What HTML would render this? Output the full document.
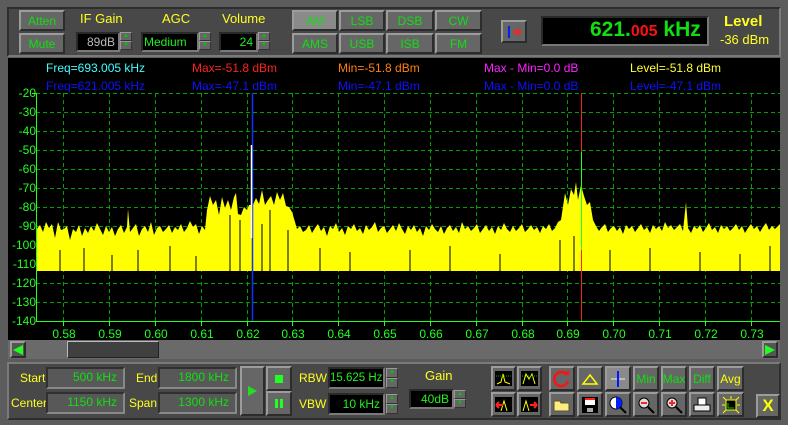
<!DOCTYPE html>
<html><head><meta charset="utf-8"><style>
*{margin:0;padding:0;box-sizing:border-box}
body{width:788px;height:425px;background:#5c5c5c;position:relative;overflow:hidden;font-family:"Liberation Sans",sans-serif;font-size:12px}
.a{position:absolute}
.panel{background:#484848;border-top:2px solid #2e2e2e;border-left:2px solid #2e2e2e;border-bottom:2px solid #7a7a7a;border-right:2px solid #7a7a7a}
.btn{position:absolute;background:#666;border-top:2px solid #9c9c9c;border-left:2px solid #9c9c9c;border-bottom:2px solid #2c2c2c;border-right:2px solid #2c2c2c;color:#10e010;text-align:center;font-size:12px;display:flex;align-items:center;justify-content:center}
.box{position:absolute;background:#000;border-top:2px solid #2a2a2a;border-left:2px solid #2a2a2a;border-bottom:2px solid #7a7a7a;border-right:2px solid #7a7a7a;color:#20f020;text-align:right;padding-right:3px;font-size:12px;line-height:16px;white-space:nowrap;overflow:hidden}
.fld{position:absolute;background:#585858;border-top:2px solid #303030;border-left:2px solid #303030;border-bottom:2px solid #888;border-right:2px solid #888;color:#10e010;text-align:right;padding-right:6px;line-height:17px;font-size:12px}
.spin{position:absolute;width:12px;background:#666}
.spin div{height:50%;border:1px solid #999;border-right-color:#333;border-bottom-color:#333;color:#0c0;font-size:6px;text-align:center;line-height:7px}
.y{color:#ffff20}
.lbl{position:absolute;font-size:12px;white-space:nowrap}
.yl{position:absolute;right:752px;color:#20ff20;font-size:12px;line-height:12px}
.xl{position:absolute;top:327px;color:#20ff20;font-size:12px;width:40px;text-align:center}
</style></head><body>
<div class="a panel" style="left:7px;top:7px;width:774px;height:50px"></div>
<div class="btn" style="left:19px;top:10px;width:46px;height:21px">Atten</div>
<div class="btn" style="left:19px;top:33px;width:46px;height:21px">Mute</div>
<div class="lbl y" style="left:80px;top:11px;font-size:13px">IF Gain</div>
<div class="lbl y" style="left:162px;top:11px;font-size:13px">AGC</div>
<div class="lbl y" style="left:222px;top:11px;font-size:13px">Volume</div>
<div class="box" style="left:76px;top:32px;width:44px;height:20px;color:#bbb">89dB</div>
<div class="spin" style="left:120px;top:32px;height:18px"><div>▲</div><div>▼</div></div>
<div class="box" style="left:141px;top:32px;width:58px;height:20px;text-align:left;padding-left:1px">Medium</div>
<div class="spin" style="left:199px;top:32px;height:18px"><div>▲</div><div>▼</div></div>
<div class="box" style="left:219px;top:32px;width:39px;height:20px">24</div>
<div class="spin" style="left:258px;top:32px;height:18px"><div>▲</div><div>▼</div></div>
<div class="btn" style="left:292px;top:10px;width:46px;height:21px;background:#8a8a8a">AM</div>
<div class="btn" style="left:339px;top:10px;width:46px;height:21px">LSB</div>
<div class="btn" style="left:386px;top:10px;width:48px;height:21px">DSB</div>
<div class="btn" style="left:435px;top:10px;width:47px;height:21px">CW</div>
<div class="btn" style="left:292px;top:33px;width:46px;height:21px">AMS</div>
<div class="btn" style="left:339px;top:33px;width:46px;height:21px">USB</div>
<div class="btn" style="left:386px;top:33px;width:48px;height:21px">ISB</div>
<div class="btn" style="left:435px;top:33px;width:47px;height:21px">FM</div>
<div class="btn" style="left:501px;top:20px;width:26px;height:23px"><svg width="18" height="14"><rect x="3" y="1" width="2" height="12" fill="#0020ff"/><path d="M7 7h8M12 4l3 3-3 3" stroke="#ff2020" stroke-width="2" fill="none"/></svg></div>
<div class="a" style="left:541px;top:16px;width:168px;height:30px;background:#000;border:2px solid #2a2a2a;border-bottom-color:#777;border-right-color:#777"></div>
<div class="lbl" style="left:590px;top:18px;font-size:21px;font-weight:bold;color:#10e010">621.<span style="color:#ff1010;font-size:16px">005</span> kHz</div>
<div class="lbl y" style="left:724px;top:13px;font-size:15px;font-weight:bold">Level</div>
<div class="lbl y" style="left:720px;top:32px;font-size:13px">-36 dBm</div>

<div class="a" style="left:8px;top:58px;width:772px;height:282px;background:#000"></div>
<div class="lbl" style="left:46px;top:61px;color:#40ffff">Freq=693.005 kHz</div>
<div class="lbl" style="left:192px;top:61px;color:#ff2020">Max=-51.8 dBm</div>
<div class="lbl" style="left:338px;top:61px;color:#ff8010">Min=-51.8 dBm</div>
<div class="lbl" style="left:484px;top:61px;color:#ff20ff">Max - Min=0.0 dB</div>
<div class="lbl" style="left:630px;top:61px;color:#ffff30">Level=-51.8 dBm</div>
<div class="lbl" style="left:46px;top:79px;color:#1010ff">Freq=621.005 kHz</div>
<div class="lbl" style="left:192px;top:79px;color:#1010ff">Max=-47.1 dBm</div>
<div class="lbl" style="left:338px;top:79px;color:#1010ff">Min=-47.1 dBm</div>
<div class="lbl" style="left:484px;top:79px;color:#1010ff">Max - Min=0.0 dB</div>
<div class="lbl" style="left:630px;top:79px;color:#1010ff">Level=-47.1 dBm</div>
<svg class="a" style="left:0;top:0" width="788" height="425">
<g stroke="#00a000" stroke-dasharray="4,3" stroke-width="1">
<path d="M36 93.5H780M36 112.5H780M36 131.5H780M36 150.5H780M36 169.5H780M36 188.5H780M36 207.5H780M36 226.5H780M36 245.5H780M36 264.5H780M36 283.5H780M36 302.5H780"/>
<path d="M63.5 93V321M109.5 93V321M155.5 93V321M201.5 93V321M247.5 93V321M292.5 93V321M338.5 93V321M384.5 93V321M430.5 93V321M476.5 93V321M522.5 93V321M567.5 93V321M613.5 93V321M659.5 93V321M705.5 93V321M751.5 93V321"/>
</g>
<polygon fill="#ffff00" points="36,271 36,230 40,225 43,232 46,222 49,228 52,224 55,238 58,222 61,230 64,229 67,226 70,240 73,229 76,232 79,225 82,236 85,228 88,233 91,226 94,231 97,223 100,229 103,235 106,226 109,232 112,227 115,236 118,229 121,225 124,233 127,227 128,209 130,232 133,228 136,224 139,236 142,229 145,226 148,232 151,222 154,235 157,228 160,226 163,232 166,229 169,225 172,233 175,227 178,230 181,224 184,232 187,228 190,221 193,227 196,224 199,234 202,226 205,230 207,210 210,196 213,205 216,200 219,215 222,197 225,208 228,200 231,210 234,197 236,193 238,214 241,215 244,207 247,210 249,205 253,205 256,198 259,204 262,190 265,205 268,200 271,196 274,205 277,192 280,200 283,193 286,206 289,207 292,212 295,222 297,229 300,226 303,232 306,230 309,225 312,233 315,228 318,224 321,231 324,227 327,236 330,226 333,229 336,223 339,232 342,228 345,235 348,226 351,229 354,224 357,231 360,228 363,234 366,225 369,230 372,227 375,222 378,232 381,228 384,226 387,233 390,229 393,225 396,231 399,223 402,229 405,234 408,226 411,230 414,225 417,232 420,228 423,236 426,226 429,230 432,224 435,229 438,232 441,226 444,234 447,228 450,225 453,231 456,227 459,233 462,222 465,229 468,226 471,231 474,228 477,224 480,233 483,229 486,225 489,231 492,227 495,234 498,226 501,230 504,223 507,229 510,232 513,226 516,231 519,228 522,224 525,232 528,229 531,225 534,230 537,227 540,233 543,226 546,229 549,224 552,231 555,228 558,222 561,220 565,193 568,205 571,189 574,195 576,182 578,200 581,185 584,196 587,205 590,202 593,220 596,226 599,231 602,227 605,224 608,232 611,228 614,226 617,231 620,227 623,234 626,225 629,229 632,226 635,232 638,228 641,224 644,230 647,227 650,233 653,225 656,229 659,226 662,231 665,222 668,228 671,225 674,230 677,227 680,224 683,231 686,202 688,228 691,233 694,226 697,229 700,225 703,232 706,228 709,223 712,230 715,227 718,233 721,225 724,229 727,226 730,231 733,228 736,224 739,230 742,226 745,233 748,228 751,224 754,229 757,226 760,232 763,227 766,223 769,230 772,226 775,229 780,224 780,271"/>
<g stroke="#000" stroke-width="1">
<path d="M60 250V271M84 248V271M112 255V271M138 250V271M170 246V271M196 256V271M230 215V271M240 220V271M262 224V271M270 210V271M288 230V271M320 248V271M350 252V271M410 250V271M450 246V271M500 254V271M560 240V271M574 236V271M610 250V271M650 248V271M700 252V271M740 254V271M770 246V271"/>
</g>
<path d="M252.5 93V321" stroke="#1030ff" stroke-width="1.5"/>
<path d="M251.5 145V238" stroke="#fff" stroke-width="1.5"/>
<path d="M581.5 93V321" stroke="#ff2020"/>
<path d="M581.5 152V250" stroke="#20ff20"/>
<path d="M36.5 93V321.5H780" stroke="#20ff20" fill="none"/>
<g stroke="#20ff20"><path d="M63.5 321V326M109.5 321V326M155.5 321V326M201.5 321V326M247.5 321V326M292.5 321V326M338.5 321V326M384.5 321V326M430.5 321V326M476.5 321V326M522.5 321V326M567.5 321V326M613.5 321V326M659.5 321V326M705.5 321V326M751.5 321V326M32 93.5H36"/></g>
</svg>
<div class="yl" style="top:87px">-20</div><div class="yl" style="top:106px">-30</div><div class="yl" style="top:125px">-40</div><div class="yl" style="top:144px">-50</div><div class="yl" style="top:163px">-60</div><div class="yl" style="top:182px">-70</div><div class="yl" style="top:201px">-80</div><div class="yl" style="top:220px">-90</div><div class="yl" style="top:239px">-100</div><div class="yl" style="top:258px">-110</div><div class="yl" style="top:277px">-120</div><div class="yl" style="top:296px">-130</div><div class="yl" style="top:315px">-140</div>
<div class="xl" style="left:44px">0.58</div><div class="xl" style="left:90px">0.59</div><div class="xl" style="left:136px">0.60</div><div class="xl" style="left:182px">0.61</div><div class="xl" style="left:228px">0.62</div><div class="xl" style="left:273px">0.63</div><div class="xl" style="left:319px">0.64</div><div class="xl" style="left:365px">0.65</div><div class="xl" style="left:411px">0.66</div><div class="xl" style="left:457px">0.67</div><div class="xl" style="left:503px">0.68</div><div class="xl" style="left:548px">0.69</div><div class="xl" style="left:594px">0.70</div><div class="xl" style="left:640px">0.71</div><div class="xl" style="left:686px">0.72</div><div class="xl" style="left:732px">0.73</div>
<div class="a" style="left:8px;top:340px;width:772px;height:19px;background:#6a6a6a"></div>
<div class="btn" style="left:10px;top:341px;width:16px;height:17px;background:#555"><svg width="10" height="10"><path d="M0 5L10 0V10Z" fill="#20ff20"/></svg></div>
<div class="a" style="left:67px;top:341px;width:92px;height:17px;background:#404040;border-top:1px solid #bbb;border-left:1px solid #bbb;border-bottom:1px solid #222;border-right:1px solid #222"></div>
<div class="btn" style="left:762px;top:341px;width:16px;height:17px;background:#555"><svg width="10" height="10"><path d="M10 5L0 0V10Z" fill="#20ff20"/></svg></div>
<div class="a panel" style="left:7px;top:362px;width:774px;height:58px;border-top-color:#7a7a7a;border-left-color:#7a7a7a;border-bottom-color:#2e2e2e;border-right-color:#2e2e2e"></div>
<div class="lbl y" style="left:20px;top:371px">Start</div>
<div class="lbl y" style="left:11px;top:396px">Center</div>
<div class="fld" style="left:46px;top:367px;width:79px;height:22px">500 kHz</div>
<div class="fld" style="left:46px;top:392px;width:79px;height:22px">1150 kHz</div>
<div class="lbl y" style="left:136px;top:371px">End</div>
<div class="lbl y" style="left:129px;top:396px">Span</div>
<div class="fld" style="left:158px;top:367px;width:79px;height:22px">1800 kHz</div>
<div class="fld" style="left:158px;top:392px;width:79px;height:22px">1300 kHz</div>
<div class="btn" style="left:240px;top:366px;width:25px;height:50px"><svg width="9" height="10"><path d="M0 0L9 5L0 10Z" fill="#20e020"/></svg></div>
<div class="btn" style="left:266px;top:366px;width:26px;height:25px"><div style="width:8px;height:8px;background:#20ff20"></div></div>
<div class="btn" style="left:266px;top:391px;width:26px;height:25px"><svg width="8" height="9"><rect width="3" height="9" fill="#20ff20"/><rect x="5" width="3" height="9" fill="#20ff20"/></svg></div>
<div class="lbl y" style="left:299px;top:371px">RBW</div>
<div class="lbl y" style="left:299px;top:397px">VBW</div>
<div class="box" style="left:328px;top:367px;width:57px;height:22px;line-height:18px;padding-right:1px;font-size:11.5px">15.625 Hz</div>
<div class="spin" style="left:386px;top:368px;height:20px"><div>▲</div><div>▼</div></div>
<div class="box" style="left:328px;top:393px;width:57px;height:22px;line-height:18px">10 kHz</div>
<div class="spin" style="left:386px;top:394px;height:20px"><div>▲</div><div>▼</div></div>
<div class="lbl y" style="left:425px;top:368px;font-size:13px">Gain</div>
<div class="box" style="left:409px;top:389px;width:45px;height:20px">40dB</div>
<div class="spin" style="left:454px;top:390px;height:18px"><div>▲</div><div>▼</div></div>
<div class="btn" style="left:491px;top:366px;width:25px;height:25px"><svg width="17" height="15"><rect width="17" height="15" fill="#000"/><path d="M2 13L6 11L8 3L10 11L15 13" stroke="#ff0" fill="none"/><path d="M1 5H16" stroke="#0a0" stroke-dasharray="1,1"/></svg></div>
<div class="btn" style="left:517px;top:366px;width:25px;height:25px"><svg width="17" height="15"><rect width="17" height="15" fill="#000"/><path d="M2 13L5 3L8 8L11 3L14 13" stroke="#ff0" fill="none"/><path d="M1 5H16" stroke="#0a0" stroke-dasharray="1,1"/></svg></div>
<div class="btn" style="left:491px;top:392px;width:25px;height:25px"><svg width="17" height="15"><rect width="17" height="15" fill="#000"/><path d="M6 14L9 4L12 14" stroke="#ff0" fill="none"/><path d="M1 8H8M1 8l3-3M1 8l3 3" stroke="#f22" stroke-width="2" fill="none"/></svg></div>
<div class="btn" style="left:517px;top:392px;width:25px;height:25px"><svg width="17" height="15"><rect width="17" height="15" fill="#000"/><path d="M2 14L5 4L8 14" stroke="#ff0" fill="none"/><path d="M9 8H16M16 8l-3-3M16 8l-3 3" stroke="#f22" stroke-width="2" fill="none"/></svg></div>
<div class="btn" style="left:549px;top:366px;width:26px;height:25px"><svg width="18" height="18"><path d="M14 5A7 7 0 1 0 15 11" stroke="#f11" stroke-width="2.5" fill="none"/><path d="M10 5h6V0z" fill="#f11"/></svg></div>
<div class="btn" style="left:577px;top:366px;width:26px;height:25px"><svg width="18" height="12"><path d="M2 11L9 2L16 11Z" stroke="#ff0" stroke-width="1.5" fill="none"/></svg></div>
<div class="btn" style="left:605px;top:366px;width:26px;height:25px;background:#8a8a8a"><svg width="18" height="18"><path d="M2 9H16" stroke="#bbb" stroke-width="2"/><rect x="8" y="1" width="2" height="16" fill="#0018ff"/></svg></div>
<div class="btn" style="left:633px;top:366px;width:26px;height:25px">Min</div>
<div class="btn" style="left:661px;top:366px;width:26px;height:25px">Max</div>
<div class="btn" style="left:689px;top:366px;width:26px;height:25px">Diff</div>
<div class="btn" style="left:717px;top:366px;width:27px;height:25px;color:#ff0">Avg</div>
<div class="btn" style="left:549px;top:392px;width:26px;height:25px"><svg width="18" height="14"><path d="M1 3h6l1 2h8v8H1z" fill="#ffec80" stroke="#553"/></svg></div>
<div class="btn" style="left:577px;top:392px;width:26px;height:25px"><svg width="16" height="16"><rect width="16" height="16" fill="#000"/><rect x="3" y="1" width="10" height="7" fill="#fff"/><rect x="3" y="1" width="10" height="2" fill="#f22"/><rect x="5" y="11" width="6" height="4" fill="#aaa"/></svg></div>
<div class="btn" style="left:605px;top:392px;width:26px;height:25px"><svg width="18" height="18"><circle cx="7" cy="7" r="6" fill="#fff" stroke="#000"/><path d="M7 1A6 6 0 0 1 7 13Z" fill="#0020ff"/><path d="M11 11L17 17" stroke="#000" stroke-width="2"/></svg></div>
<div class="btn" style="left:633px;top:392px;width:26px;height:25px"><svg width="18" height="18"><circle cx="7" cy="7" r="5" fill="#ddd" stroke="#000"/><path d="M4 7H10" stroke="#f22" stroke-width="2"/><path d="M11 11L17 17" stroke="#000" stroke-width="2"/></svg></div>
<div class="btn" style="left:661px;top:392px;width:26px;height:25px"><svg width="18" height="18"><circle cx="7" cy="7" r="5" fill="#ddd" stroke="#000"/><path d="M4 7H10M7 4V10" stroke="#f22" stroke-width="2"/><path d="M11 11L17 17" stroke="#000" stroke-width="2"/></svg></div>
<div class="btn" style="left:689px;top:392px;width:26px;height:25px"><svg width="18" height="16"><rect x="5" y="1" width="8" height="7" fill="#fff" stroke="#000"/><rect x="1" y="8" width="16" height="6" fill="#eee" stroke="#000"/></svg></div>
<div class="btn" style="left:717px;top:392px;width:27px;height:25px"><svg width="18" height="18"><path d="M1 1L5 5M17 1L13 5M1 17L5 13M17 17L13 13M9 0V3M0 9H3M18 9H15" stroke="#ff0"/><rect x="4" y="4" width="10" height="10" fill="#000" stroke="#ff0"/><path d="M6 7V12H12" stroke="#0c0" fill="none"/></svg></div>
<div class="btn" style="left:756px;top:394px;width:24px;height:24px;color:#ff0;font-weight:bold;font-size:17px">X</div>
</body></html>
